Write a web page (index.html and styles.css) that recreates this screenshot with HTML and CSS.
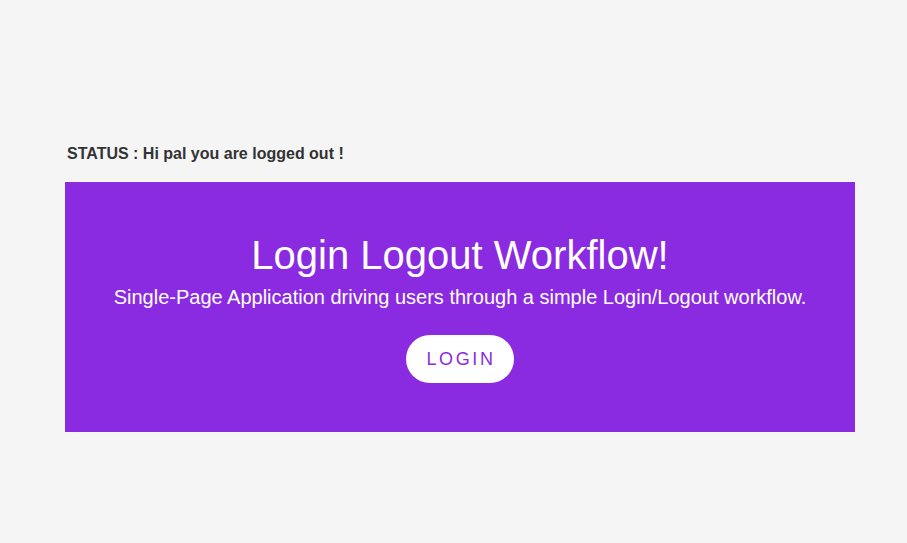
FILE: index.html
```html
<!DOCTYPE html>
<html>
<head>
<meta charset="utf-8">
<link rel="stylesheet" href="styles.css">
</head>
<body>
<div class="page">
  <p class="status">STATUS : Hi pal you are logged out !</p>
  <section class="banner">
    <h1 class="title">Login Logout Workflow!</h1>
    <p class="subtitle">Single-Page Application driving users through a simple Login/Logout workflow.</p>
    <button class="login">LOGIN</button>
  </section>
</div>
</body>
</html>
```
FILE: styles.css
```css
html, body {
  margin: 0;
  padding: 0;
  background: #f5f5f5;
  font-family: "Liberation Sans", Arial, sans-serif;
}
.page {
  width: 790px;
  margin-left: 65px;
  padding-top: 145px;
}
.status {
  margin: 0 0 0 2px;
  font-size: 16px;
  line-height: 18px;
  font-weight: bold;
  color: #333333;
}
.banner {
  margin-top: 19px;
  background: #8a2be2;
  height: 250px;
  box-sizing: border-box;
  padding-top: 50px;
  display: flex;
  flex-direction: column;
  align-items: center;
  color: #ffffff;
}
.title {
  margin: 0;
  font-size: 40px;
  line-height: 46px;
  font-weight: normal;
}
.subtitle {
  margin: 8px 0 0;
  font-size: 20px;
  line-height: 23px;
}
.login {
  margin-top: 26px;
  width: 108px;
  height: 48px;
  border: none;
  border-radius: 24px;
  background: #ffffff;
  color: #8a2be2;
  font-family: "Liberation Sans", Arial, sans-serif;
  font-size: 18px;
  letter-spacing: 2.6px;
  padding: 0 0 0 2px;
  cursor: pointer;
}
```
